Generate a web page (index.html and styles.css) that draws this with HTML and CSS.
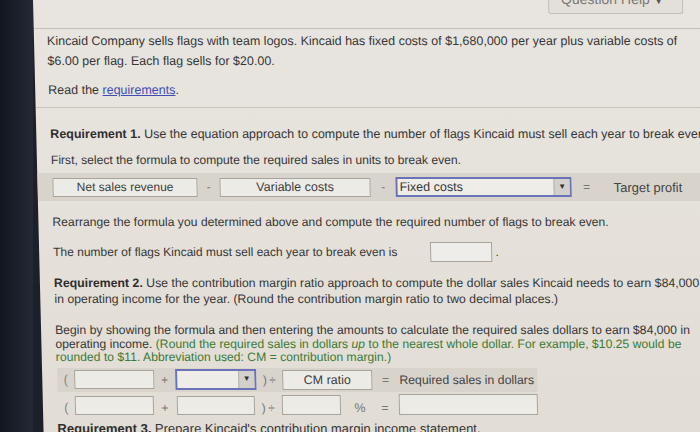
FILE: index.html
```html
<!DOCTYPE html>
<html>
<head>
<meta charset="utf-8">
<link rel="stylesheet" href="styles.css">
</head>
<body>
<div class="frame">
  <div class="edge"></div>
  <div class="page">
    <div class="header">
      <div class="help-btn">Question Help <span class="caret">▼</span></div>
    </div>
    <div class="intro">
      <p class="p1">Kincaid Company sells flags with team logos. Kincaid has fixed costs of $1,680,000 per year plus variable costs of<br>$6.00 per flag. Each flag sells for $20.00.</p>
      <p class="p2">Read the <a class="link">requirements</a>.</p>
    </div>
    <div class="body">
      <p class="req1"><b>Requirement 1.</b> Use the equation approach to compute the number of flags Kincaid must sell each year to break even.</p>
      <p class="first">First, select the formula to compute the required sales in units to break even.</p>
      <div class="band band1">
        <div class="box b-net">Net sales revenue</div>
        <span class="op op1">-</span>
        <div class="box b-var">Variable costs</div>
        <span class="op op2">-</span>
        <div class="select s-fixed"><span class="sel-text">Fixed costs</span><span class="arrow">▼</span></div>
        <span class="op op3">=</span>
        <span class="target">Target profit</span>
      </div>
      <p class="rearr">Rearrange the formula you determined above and compute the required number of flags to break even.</p>
      <div class="answer">
        <span>The number of flags Kincaid must sell each year to break even is</span>
        <div class="box b-ans"></div><span class="dot">.</span>
      </div>
      <p class="req2"><b>Requirement 2.</b> Use the contribution margin ratio approach to compute the dollar sales Kincaid needs to earn $84,000<br>in operating income for the year. (Round the contribution margin ratio to two decimal places.)</p>
      <p class="begin">Begin by showing the formula and then entering the amounts to calculate the required sales dollars to earn $84,000 in<br>operating income. <span class="green">(Round the required sales in dollars <i>up</i> to the nearest whole dollar. For example, $10.25 would be<br>rounded to $11. Abbreviation used: CM = contribution margin.)</span></p>
      <div class="grid2">
        <div class="row r1">
          <span class="paren">(</span>
          <div class="box b-a"></div>
          <span class="op plus">+</span>
          <div class="select s-b"><span class="sel-text"></span><span class="arrow">▼</span></div>
          <span class="op div">)&thinsp;÷</span>
          <div class="box b-cm">CM ratio</div>
          <span class="op eq">=</span>
          <span class="req-sales">Required sales in dollars</span>
        </div>
        <div class="row r2">
          <span class="paren">(</span>
          <div class="box b-a"></div>
          <span class="op plus">+</span>
          <div class="box b-b2"></div>
          <span class="op div">)&thinsp;÷</span>
          <div class="box b-pct"></div>
          <span class="pct">%</span>
          <span class="op eq2">=</span>
          <div class="box b-res"></div>
        </div>
      </div>
      <p class="req3"><b>Requirement 3.</b> Prepare Kincaid's contribution margin income statement.</p>
    </div>
  </div>
</div>
</body>
</html>
```

FILE: styles.css
```css
html, body {
  margin: 0;
  padding: 0;
  width: 700px;
  height: 432px;
  overflow: hidden;
  background: #1b202a;
}
body {
  font-family: "Liberation Sans", Arial, sans-serif;
  color: #363636;
  font-size: 12px;
}
p { margin: 0; white-space: nowrap; }
.frame {
  display: flex;
  height: 432px;
  overflow: hidden;
}
.edge {
  width: 33px;
  flex: none;
  background: linear-gradient(90deg, #121620, #232936);
}
.page {
  flex: none;
  width: 690px;
  height: 460px;
  background: linear-gradient(180deg, #e8e5e0 0%, #e5e1da 50%, #e1dcd4 100%);
  overflow: hidden;
  transform-origin: 0 0;
  transform: skewX(1.4deg);
}
.header {
  box-sizing: border-box;
  width: 667px;
  height: 29px;
  border-bottom: 1px solid #c5c1ba;
  display: flex;
  justify-content: flex-end;
  padding-right: 17px;
}
.help-btn {
  margin-top: -18px;
  height: 32px;
  width: 135px;
  box-sizing: border-box;
  border: 1px solid #c3bfb8;
  border-radius: 3px;
  background: #e4e0d9;
  color: #7a7874;
  font-size: 14px;
  line-height: 30px;
  padding: 1px 0 0 12px;
}
.help-btn .caret { font-size: 10px; color: #555; }
.intro {
  padding: 2px 0 9px 13px;
  border-bottom: 1px solid #c9c5be;
}
.p1 {
  font-size: 12.5px;
  line-height: 20px;
}
.p2 {
  margin-top: 11px;
  font-size: 12.5px;
  line-height: 16px;
}
.link {
  color: #3f4db3;
  text-decoration: underline;
}
.body {
  padding: 18px 0 0 14px;
}
.req1 {
  font-size: 12.5px;
  line-height: 16px;
}
.req1 b, .req2 b, .req3 b { color: #2e2e2e; }
.first {
  margin-top: 10px;
  font-size: 12.1px;
  line-height: 16px;
}
.band {
  display: flex;
  align-items: center;
  background: #d8d4cc;
}
.band1 {
  margin: 5px 0 0 -14px;
  height: 28px;
  padding-left: 15px;
}
.box {
  box-sizing: border-box;
  height: 19px;
  border: 1px solid #a7a49e;
  background: #edebe6;
  text-align: center;
  font-size: 12.5px;
  line-height: 17px;
  color: #3d3d3d;
  white-space: nowrap;
  overflow: hidden;
}
.b-net { width: 145px; font-size: 12px; }
.b-var { width: 151px; }
.op { color: #777; font-size: 12px; text-align: center; }
.op1 { width: 22px; }
.op2 { width: 25px; }
.select {
  box-sizing: border-box;
  height: 20px;
  border: 2px solid #6a73b8;
  background: #efede8;
  display: flex;
  align-items: center;
  font-size: 12.5px;
}
.s-fixed { width: 176px; }
.sel-text { flex: 1; padding-left: 2px; }
.arrow {
  width: 15px;
  height: 16px;
  background: #d3d0cb;
  border-left: 1px solid #b5b2ac;
  font-size: 8px;
  text-align: center;
  line-height: 16px;
  color: #333;
}
.op3 { width: 30px; }
.target { margin-left: 12px; font-size: 13px; color: #444; }
.rearr {
  margin-top: 13px;
  font-size: 12.2px;
  line-height: 16px;
}
.answer {
  margin-top: 12px;
  height: 20px;
  display: flex;
  align-items: center;
  font-size: 12px;
}
.b-ans {
  width: 62px;
  height: 20px;
  margin-left: 33px;
  background: #efede9;
}
.dot { margin-left: 3px; }
.req2 {
  margin-top: 13px;
  font-size: 12.3px;
  line-height: 16px;
}
.begin {
  margin-top: 17px;
  font-size: 12.2px;
  line-height: 13.5px;
}
.green { color: #3b7a34; }
.grid2 {
  margin: 3px 0 0 1px;
  width: 480px;
}
.row {
  display: flex;
  align-items: center;
  height: 24px;
}
.r1 { background: #d8d4cc; }
.paren { width: 17px; text-align: center; color: #888; font-size: 13px; }
.b-a { width: 80px; height: 19px; }
.plus { width: 21px; }
.s-b { width: 81px; height: 21px; }
.s-b .arrow { height: 17px; }
.b-b2 { width: 78px; height: 19px; margin-left: 2px; }
.div { width: 26px; }
.r2 .div { width: 27px; }
.b-cm { width: 90px; height: 20px; line-height: 18px; font-size: 12.5px; }
.eq { width: 27px; }
.req-sales { font-size: 12.3px; color: #444; white-space: nowrap; }
.b-pct { width: 60px; height: 20px; }
.pct { width: 38px; text-align: center; color: #777; font-size: 12.5px; }
.eq2 { width: 12px; }
.b-res { width: 140px; height: 21px; margin-left: 8px; }
.r2 { align-items: flex-end; padding-bottom: 1px; box-sizing: border-box; }
.req3 {
  margin-top: 5px;
  font-size: 13px;
  line-height: 16px;
}
```
